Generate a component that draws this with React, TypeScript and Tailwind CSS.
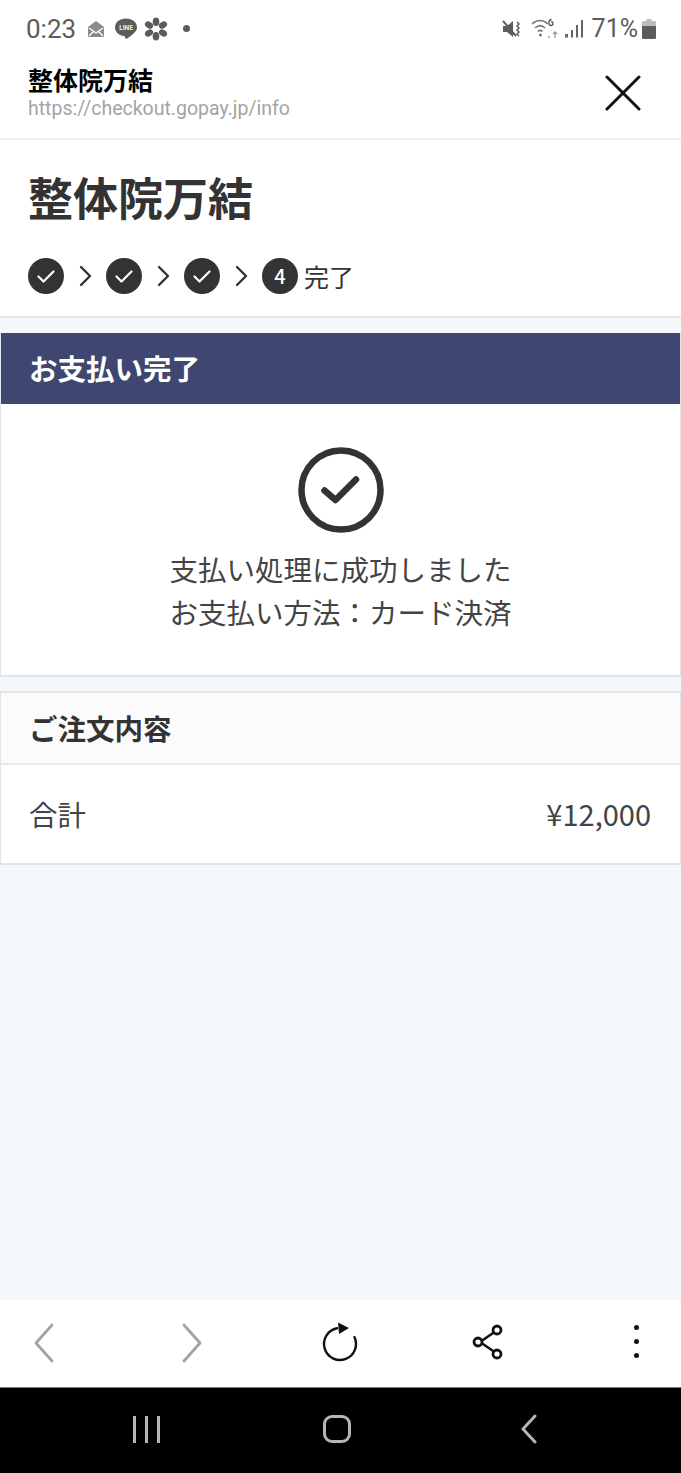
const jp = "font-['Noto_Sans_CJK_JP',sans-serif]";

function CheckBadge() {
  return (
    <svg width="36" height="36" viewBox="0 0 36 36" className="shrink-0">
      <circle cx="18" cy="18" r="18" fill="#333333" />
      <path d="M10.5 18.5l5 5 10-10" fill="none" stroke="#fff" strokeWidth="2.2" strokeLinecap="round" strokeLinejoin="round" />
    </svg>
  );
}

function StepArrow() {
  return (
    <svg width="14" height="22" viewBox="0 0 14 22" className="ml-[15px] mr-[13px] shrink-0">
      <path d="M2 2l9 9-9 9" fill="none" stroke="#333333" strokeWidth="2.4" strokeLinecap="round" strokeLinejoin="round" />
    </svg>
  );
}

function StatusBar() {
  return (
    <div className="h-[54px] flex items-center justify-between pl-[26px] pr-[25px] pt-[3px] font-['Roboto',sans-serif] text-[#5c5c5c]">
      <div className="flex items-center">
        <span className="text-[26px] leading-none mr-[11px]">0:23</span>
        {/* mail */}
        <svg width="18" height="18" viewBox="0 0 18 18" className="mr-[9px]">
          <path d="M1 7l8-6 8 6v10H1z" fill="#8a8a8a" />
          <path d="M2 8l7 5 7-5M2 16l5-5M16 16l-5-5" fill="none" stroke="#fff" strokeWidth="1.3" />
        </svg>
        {/* LINE */}
        <svg width="24" height="24" viewBox="0 0 24 24" className="mr-[6px]">
          <path d="M12 1.5C5.6 1.5 1 5.2 1 10.4c0 4.6 3.8 8 9.4 8.7.8.2.4 2.7 1.6 2.7 1.2 0 6-3.5 8-5.8 1.7-1.8 3-3.5 3-5.6 0-5.2-4.6-8.9-11-8.9z" fill="#5c5c5c" />
          <text x="12" y="13" textAnchor="middle" fontSize="6.5" fontWeight="700" fill="#eeeeee" fontFamily="Roboto, sans-serif">LINE</text>
        </svg>
        {/* flower */}
        <svg width="24" height="24" viewBox="0 0 24 24" className="mr-[15px]">
          <g fill="#5c5c5c">
            <ellipse cx="12" cy="4.8" rx="3.3" ry="4.3" />
            <ellipse cx="12" cy="19.2" rx="3.3" ry="4.3" />
            <ellipse cx="5" cy="8" rx="4.3" ry="3.2" transform="rotate(30 5 8)" />
            <ellipse cx="19" cy="8" rx="4.3" ry="3.2" transform="rotate(-30 19 8)" />
            <ellipse cx="5" cy="16" rx="4.3" ry="3.2" transform="rotate(-30 5 16)" />
            <ellipse cx="19" cy="16" rx="4.3" ry="3.2" transform="rotate(30 19 16)" />
          </g>
        </svg>
        <div className="w-[7px] h-[7px] rounded-full bg-[#5c5c5c]" />
      </div>
      <div className="flex items-center">
        {/* muted */}
        <svg width="20" height="20" viewBox="0 0 20 20" className="mr-[9px]">
          <path d="M1 7h4l6-5v16l-6-5H1z" fill="#5c5c5c" />
          <path d="M1 2l13 15" stroke="#5c5c5c" strokeWidth="2" />
          <path d="M15 3l2 2-2 2 2 2-2 2 2 2-2 2 2 2" fill="none" stroke="#5c5c5c" strokeWidth="1.5" />
        </svg>
        {/* wifi */}
        <svg width="28" height="22" viewBox="0 0 28 22" className="mr-[6px]">
          <g fill="none" stroke="#777777" strokeWidth="1.6">
            <path d="M1 6c5-4.5 11-4.5 16 0" />
            <path d="M4 10c3.5-3 7-3 10 0" />
            <path d="M7 13.5c1.5-1.5 3-1.5 4.5 0" />
          </g>
          <circle cx="9.5" cy="17" r="1.5" fill="#777777" />
          <path d="M17 19h2M24 20v-6M22 16l2-2 2 2" fill="none" stroke="#999999" strokeWidth="1.3" />
          <path d="M20.5 1.5c-2 0-2.5 2-2.5 3.5s.6 2.5 2 2.5 2-1 2-2-.8-1.8-2-1.8" fill="none" stroke="#555555" strokeWidth="1.3" />
        </svg>
        {/* signal */}
        <svg width="19" height="20" viewBox="0 0 19 20" className="mr-[8px]">
          <g fill="#666666">
            <rect x="0" y="15" width="3" height="3.5" />
            <rect x="6" y="11" width="2" height="7.5" />
            <rect x="11" y="6" width="2" height="12.5" />
            <rect x="16" y="1" width="2" height="17.5" />
          </g>
        </svg>
        <span className="text-[25px] leading-none mr-[4px]">71%</span>
        {/* battery */}
        <svg width="14" height="20" viewBox="0 0 14 20">
          <path d="M4.5 0h5v2h3a1.5 1.5 0 0 1 1.5 1.5V18.5A1.5 1.5 0 0 1 12.5 20h-11A1.5 1.5 0 0 1 0 18.5V3.5A1.5 1.5 0 0 1 1.5 2h3z" fill="#bcbcbc" />
          <path d="M0 7h14v11.5a1.5 1.5 0 0 1-1.5 1.5h-11A1.5 1.5 0 0 1 0 18.5z" fill="#5c5c5c" />
        </svg>
      </div>
    </div>
  );
}

function BrowserHeader() {
  return (
    <div className="h-[86px] border-b-2 border-[#f1f1f1] flex justify-between pl-[28px] pr-[40px]">
      <div className="pt-[9px]">
        <div className={`${jp} text-[25px] leading-[32px] font-bold text-black`}>整体院万結</div>
        <div className="font-['Roboto',sans-serif] text-[19.5px] leading-[20px] mt-[4px] text-[#a4a4a4]">https://checkout.gopay.jp/info</div>
      </div>
      <svg width="36" height="36" viewBox="0 0 36 36" className="mt-[21px]">
        <path d="M2 2l32 32M34 2L2 34" fill="none" stroke="#111111" strokeWidth="3" strokeLinecap="round" />
      </svg>
    </div>
  );
}

function PageHeader() {
  return (
    <div className={`${jp} h-[178px] bg-white border-b-2 border-[#e8e8e8] pl-[28px] text-[#333333]`}>
      <h1 className="text-[45px] leading-[64px] font-bold pt-[25px]">整体院万結</h1>
      <div className="flex items-center mt-[29px]">
        <CheckBadge />
        <StepArrow />
        <CheckBadge />
        <StepArrow />
        <CheckBadge />
        <StepArrow />
        <div className="w-[36px] h-[36px] rounded-full bg-[#333333] text-white text-[20px] font-medium flex items-center justify-center">4</div>
        <span className="text-[25px] leading-[36px] ml-[6px]">完了</span>
      </div>
    </div>
  );
}

function PaymentCard() {
  return (
    <section className="h-[344px] bg-white border border-t-0 border-[#e2e4e8] border-b-2">
      <div className="h-[71px] bg-[#3f4770] pl-[28px] flex items-center text-white text-[28.5px] font-bold">お支払い完了</div>
      <div className="flex flex-col items-center pt-[42px] text-[#444444] text-[28.5px] leading-[43px]">
        <svg width="88" height="88" viewBox="0 0 88 88">
          <circle cx="44" cy="44" r="39.5" fill="none" stroke="#333333" strokeWidth="6.5" />
          <path d="M27.5 44.5L38.5 54 59 33.5" fill="none" stroke="#333333" strokeWidth="6.5" strokeLinecap="round" strokeLinejoin="round" />
        </svg>
        <p className="mt-[13px]">支払い処理に成功しました</p>
        <p>お支払い方法：カード決済</p>
      </div>
    </section>
  );
}

function OrderCard() {
  return (
    <section className="h-[174px] bg-white border border-[#e2e4e8] border-t-2 border-b-2 mt-[14px]">
      <div className="h-[72px] bg-[#fbfbfc] border-b-2 border-[#e8e8e8] pl-[28px] flex items-center text-[#333333] text-[28.5px] font-bold">ご注文内容</div>
      <div className="h-[98px] flex items-center justify-between pl-[28px] pr-[29px] text-[#444444] text-[28.5px]">
        <span>合計</span>
        <span className="text-[29px]">¥12,000</span>
      </div>
    </section>
  );
}

function BrowserToolbar() {
  return (
    <div className="h-[87px] bg-white flex items-center justify-between pl-[24px] pr-[25px] pb-[4px]">
      <div className="w-[40px] flex justify-center">
        <svg width="22" height="46" viewBox="0 0 22 46">
          <path d="M19 6L3 24l16 18" fill="none" stroke="#a3a3a3" strokeWidth="2.8" strokeLinecap="round" strokeLinejoin="round" />
        </svg>
      </div>
      <div className="w-[40px] flex justify-center">
        <svg width="22" height="46" viewBox="0 0 22 46">
          <path d="M3 6l16 18L3 42" fill="none" stroke="#a3a3a3" strokeWidth="2.8" strokeLinecap="round" strokeLinejoin="round" />
        </svg>
      </div>
      <div className="w-[40px] flex justify-center">
        <svg width="38" height="46" viewBox="2 0 38 46">
          <path d="M18 9.3A16 16 0 1 0 35.4 18" fill="none" stroke="#111111" strokeWidth="2.4" strokeLinecap="round" />
          <path d="M19 3.5L30 9l-10 6z" fill="#111111" />
        </svg>
      </div>
      <div className="w-[40px] flex justify-center">
        <svg width="32" height="36" viewBox="0 0 32 36">
          <path d="M8 18l16-11M8 18l16 11" stroke="#111111" strokeWidth="2.6" />
          <circle cx="6" cy="18" r="4" fill="#fff" stroke="#111111" strokeWidth="2.8" />
          <circle cx="25" cy="6" r="4" fill="#fff" stroke="#111111" strokeWidth="2.8" />
          <circle cx="25" cy="30" r="4" fill="#fff" stroke="#111111" strokeWidth="2.8" />
        </svg>
      </div>
      <div className="w-[40px] flex flex-col items-center gap-[9px]">
        <div className="w-[5px] h-[5px] rounded-full bg-[#111111]" />
        <div className="w-[5px] h-[5px] rounded-full bg-[#111111]" />
        <div className="w-[5px] h-[5px] rounded-full bg-[#111111]" />
      </div>
    </div>
  );
}

function NavBar() {
  return (
    <div className="h-[86px] bg-black border-t border-[#777777] flex items-center pl-[133px] pb-[3px]">
      <div className="flex gap-[9px]">
        <div className="w-[3px] h-[27px] bg-[#b5b5b5]" />
        <div className="w-[3px] h-[27px] bg-[#b5b5b5]" />
        <div className="w-[3px] h-[27px] bg-[#b5b5b5]" />
      </div>
      <div className="w-[28px] h-[28px] rounded-[9px] border-[3px] border-[#b5b5b5] ml-[163px]" />
      <svg width="18" height="30" viewBox="0 0 18 30" className="ml-[169px]">
        <path d="M15 2L3 15l12 13" fill="none" stroke="#b5b5b5" strokeWidth="3" strokeLinecap="round" strokeLinejoin="round" />
      </svg>
    </div>
  );
}

export default function App() {
  return (
    <div className={`${jp} w-[681px] h-[1473px] flex flex-col bg-[#f4f7fc] overflow-hidden`}>
      <div className="bg-white">
        <StatusBar />
        <BrowserHeader />
      </div>
      <PageHeader />
      <main className="flex-1 pt-[15px]">
        <PaymentCard />
        <OrderCard />
      </main>
      <BrowserToolbar />
      <NavBar />
    </div>
  );
}
